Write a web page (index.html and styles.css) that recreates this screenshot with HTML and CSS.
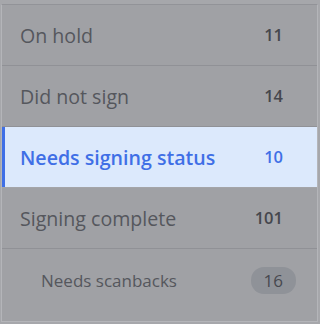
FILE: index.html
```html
<!DOCTYPE html>
<html>
<head>
<meta charset="utf-8">
<link rel="stylesheet" href="styles.css">
</head>
<body>
<div class="frame">
  <ul class="list">
    <li class="row"><span class="label">On hold</span><span class="count">11</span></li>
    <li class="row"><span class="label">Did not sign</span><span class="count">14</span></li>
    <li class="row active"><span class="label">Needs signing status</span><span class="count">10</span></li>
    <li class="row"><span class="label">Signing complete</span><span class="count">101</span></li>
    <li class="row sub"><span class="label">Needs scanbacks</span><span class="count pill">16</span></li>
  </ul>
</div>
</body>
</html>
```
FILE: styles.css
```css
html, body {
  margin: 0;
  padding: 0;
  background: #a3a4a8;
  font-family: "Open Sans", "Liberation Sans", sans-serif;
}
.frame {
  width: 320px;
  height: 324px;
  box-sizing: border-box;
  padding: 4px 2px 2px 1px;
  background: #a6a7ab;
}
.list {
  list-style: none;
  margin: 0;
  padding: 0 0 11px 0;
  height: 100%;
  box-sizing: border-box;
  background: #a0a1a5;
  border-top: 1px solid #929398;
  border-left: 1px solid #b4b5b9;
  border-right: 1px solid #b4b5b9;
  border-bottom: 1px solid #b4b5b9;
}
.row {
  display: flex;
  align-items: center;
  justify-content: space-between;
  height: 60px;
  padding: 0 21px 0 18px;
  border-bottom: 1px solid #909196;
  color: #55575d;
}
.label {
  font-size: 19.6px;
}
.count {
  font-size: 16.5px;
  font-weight: 600;
  color: #45474d;
  padding: 0 13px;
  line-height: 26px;
  border-radius: 13px;
}
.active {
  background: #dce9fc;
  box-shadow: inset 3px 0 0 #3f6fe6;
  color: #3f6fe6;
  border-bottom-color: #a4a5a9;
}
.active .label {
  font-weight: 600;
}
.active .count {
  color: #3f6fe6;
  font-weight: 600;
}
.sub {
  border-bottom: none;
  height: 62px;
  padding-left: 39px;
}
.sub .label {
  font-size: 17px;
}
.sub .count {
  font-weight: 400;
  font-size: 17px;
  color: #474950;
  line-height: 27px;
}
.pill {
  background: #8f9298;
}
```
